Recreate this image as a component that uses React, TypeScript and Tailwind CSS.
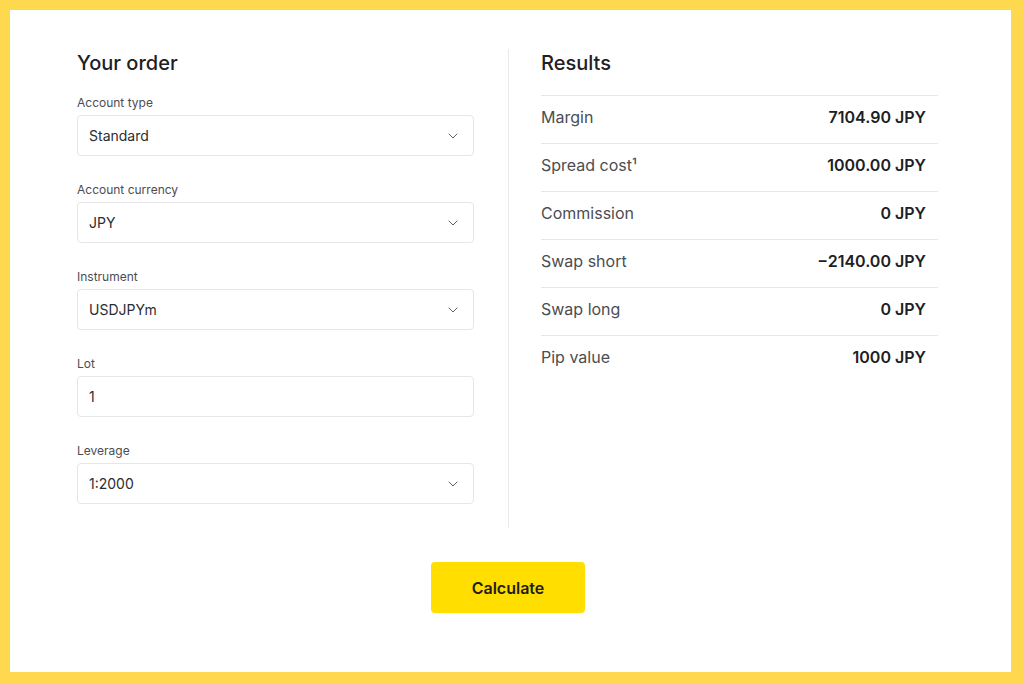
import { ChevronDown } from "lucide-react";

interface Field {
    label: string;
    value: string;
    select: boolean;
}

const fields: Field[] = [
    { label: "Account type", value: "Standard", select: true },
    { label: "Account currency", value: "JPY", select: true },
    { label: "Instrument", value: "USDJPYm", select: true },
    { label: "Lot", value: "1", select: false },
    { label: "Leverage", value: "1:2000", select: true },
];

const results = [
    { label: "Margin", value: "7104.90 JPY" },
    { label: "Spread cost¹", value: "1000.00 JPY" },
    { label: "Commission", value: "0 JPY" },
    { label: "Swap short", value: "−2140.00 JPY" },
    { label: "Swap long", value: "0 JPY" },
    { label: "Pip value", value: "1000 JPY" },
];

function OrderField({ label, value, select }: Field) {
    return (
        <div className="flex flex-col">
            <div className="text-[12px] leading-4 text-[#4b4d52] mb-[4px]">{label}</div>
            <div className="h-[41px] flex items-center justify-between rounded-[4px] border border-[#e4e6e9] bg-white pl-[11px] pr-3">
                <span className="text-[14px] text-[#2b2d31]">{value}</span>
                {select && <ChevronDown size={16} strokeWidth={1.5} className="text-[#5f6267]" />}
            </div>
        </div>
    );
}

export default function App() {
    return (
        <div
            className="h-[684px] w-full bg-[#fed84e] p-[10px] pr-[13px] pb-[12px]"
            style={{ fontFamily: "Inter, 'Noto Sans', sans-serif" }}
        >
            <div className="h-full w-full bg-white pt-[39px] pl-[67px]">
                <div className="w-[862px] flex flex-col items-center">
                    {/* two columns with divider */}
                    <div className="w-full flex">
                        {/* Your order */}
                        <div className="w-[397px] flex flex-col pb-6">
                            <h2 className="text-[20px] leading-7 font-medium text-[#1d2024] mb-[18px]">Your order</h2>
                            <div className="flex flex-col gap-[26px]">
                                {fields.map((f) => (
                                    <OrderField key={f.label} {...f} />
                                ))}
                            </div>
                        </div>

                        <div className="ml-[34px] mr-[32px] w-px bg-[#e8e9eb]" />

                        {/* Results */}
                        <div className="w-[397px] flex flex-col">
                            <h2 className="text-[20px] leading-7 font-medium text-[#1d2024] mb-[18px]">Results</h2>
                            {results.map((r) => (
                                <div
                                    key={r.label}
                                    className="h-[48px] flex items-center justify-between pr-3 pb-[5px] border-t border-[#e4e6e9]"
                                >
                                    <span className="text-[16px] text-[#4b4d52]">{r.label}</span>
                                    <span className="text-[16px] font-semibold text-[#1d2024]">{r.value}</span>
                                </div>
                            ))}
                        </div>
                    </div>

                    <button className="mt-[34px] w-[154px] h-[51px] rounded-[4px] bg-[#ffde00] text-[16px] font-semibold text-[#1d1d1b]">
                        Calculate
                    </button>
                </div>
            </div>
        </div>
    );
}
